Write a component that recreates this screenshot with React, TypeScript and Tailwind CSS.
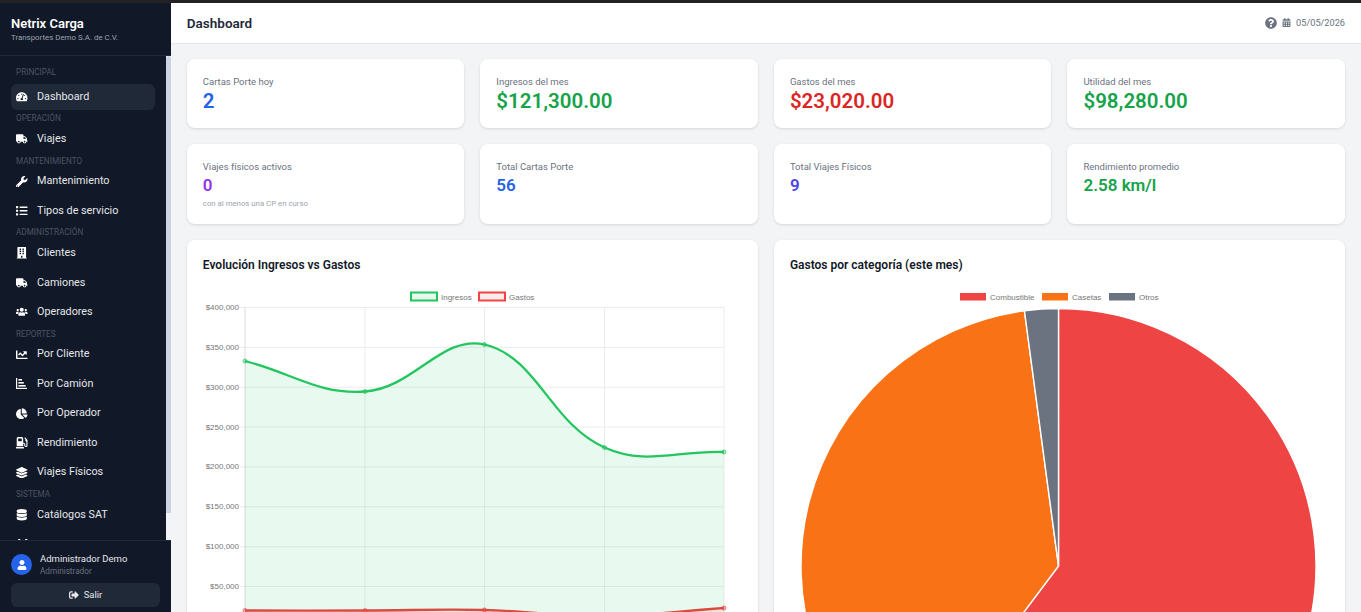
import type { ReactNode } from "react";
import {
  FaBuilding,
  FaCalendarAlt,
  FaChartLine,
  FaChartPie,
  FaDatabase,
  FaGasPump,
  FaLayerGroup,
  FaList,
  FaQuestionCircle,
  FaSignOutAlt,
  FaTachometerAlt,
  FaTruck,
  FaUser,
  FaUsers,
  FaWrench,
} from "react-icons/fa";

const font = "font-['Roboto','Liberation_Sans',sans-serif]";

function SectionLabel({ children }: { children: ReactNode }) {
  return (
    <div className="h-[12.8px] pl-[5px] text-[8.2px] leading-[10px] text-[#4b5563] uppercase">
      {children}
    </div>
  );
}

function NavItem({
  icon,
  label,
  active,
}: {
  icon: ReactNode;
  label?: string;
  active?: boolean;
}) {
  return (
    <div
      className={
        "mb-[3.5px] flex h-[26px] items-center rounded-md pl-[5px] text-[10.8px] text-[#e5e7eb] " +
        (active ? "bg-[#1f2937]" : "")
      }
    >
      <span className="flex w-[21px] shrink-0 items-center text-[11.5px] text-white">{icon}</span>
      {label}
    </div>
  );
}

function BarsIcon() {
  return (
    <svg width="11" height="11" viewBox="0 0 11 11" fill="currentColor">
      <rect x="0" y="0" width="1.2" height="11" />
      <rect x="0" y="9.8" width="11" height="1.2" />
      <rect x="2.4" y="1" width="3.6" height="1.6" />
      <rect x="2.4" y="4" width="5.4" height="1.6" />
      <rect x="2.4" y="7" width="7.2" height="1.6" />
    </svg>
  );
}

// last item of the menu, only the top of its icon shows above the footer
function PeekIcon() {
  return (
    <svg width="12" height="11" viewBox="0 0 12 11" fill="currentColor">
      <rect x="2" y="0" width="2.5" height="11" rx="1" />
      <rect x="9" y="0" width="2.5" height="11" rx="1" />
    </svg>
  );
}

function Sidebar() {
  return (
    <aside className="flex h-full w-[170.8px] shrink-0 flex-col bg-[#111827]">
      <div className="h-[53px] shrink-0 border-b border-[#1f2937] pt-[12px] pl-[11px]">
        <div className="text-[13px] leading-[17px] font-semibold text-white">Netrix Carga</div>
        <div className="text-[7.9px] leading-[12px] text-[#9ca3af]">Transportes Demo S.A. de C.V.</div>
      </div>
      <div className="flex min-h-0 flex-1">
        <nav className="min-w-0 flex-1 overflow-hidden pt-[11px] pr-[11px] pl-[11px]">
          <div className="mb-[4px]">
            <SectionLabel>Principal</SectionLabel>
          </div>
          <NavItem active icon={<FaTachometerAlt />} label="Dashboard" />
          <SectionLabel>Operación</SectionLabel>
          <NavItem icon={<FaTruck />} label="Viajes" />
          <SectionLabel>Mantenimiento</SectionLabel>
          <NavItem icon={<FaWrench />} label="Mantenimiento" />
          <NavItem icon={<FaList />} label="Tipos de servicio" />
          <SectionLabel>Administración</SectionLabel>
          <NavItem icon={<FaBuilding />} label="Clientes" />
          <NavItem icon={<FaTruck />} label="Camiones" />
          <NavItem icon={<FaUsers />} label="Operadores" />
          <SectionLabel>Reportes</SectionLabel>
          <NavItem icon={<FaChartLine />} label="Por Cliente" />
          <NavItem icon={<BarsIcon />} label="Por Camión" />
          <NavItem icon={<FaChartPie />} label="Por Operador" />
          <NavItem icon={<FaGasPump />} label="Rendimiento" />
          <NavItem icon={<FaLayerGroup />} label="Viajes Físicos" />
          <SectionLabel>Sistema</SectionLabel>
          <NavItem icon={<FaDatabase />} label="Catálogos SAT" />
          <NavItem icon={<PeekIcon />} />
        </nav>
        <div className="flex w-[5px] shrink-0 flex-col bg-[#f1f5f9]">
          <div className="flex-1 rounded-t-sm bg-[#cbd5e1]" />
          <div className="h-[27px]" />
        </div>
      </div>
      <div className="h-[72px] shrink-0 border-t border-[#1f2937] px-[11px] pt-[11px]">
        <div className="flex items-center gap-2">
          <div className="flex h-[21px] w-[21px] items-center justify-center rounded-full bg-[#2563eb] text-[10px] text-white">
            <FaUser />
          </div>
          <div>
            <div className="text-[9.5px] leading-[13px] text-[#e5e7eb]">Administrador Demo</div>
            <div className="text-[8.2px] leading-[12px] text-[#6b7280]">Administrador</div>
          </div>
        </div>
        <div className="mt-[6px] flex h-[24px] w-[149px] items-center justify-center gap-[5px] rounded-md bg-[#1f2937] text-[9.5px] text-[#e5e7eb]">
          <FaSignOutAlt className="text-[10px]" />
          Salir
        </div>
      </div>
    </aside>
  );
}

function StatCard({
  label,
  value,
  color,
  big,
  note,
}: {
  label: string;
  value: string;
  color: string;
  big?: boolean;
  note?: string;
}) {
  return (
    <div className="rounded-lg bg-white px-4 pt-[16px] shadow-[0_1px_3px_rgba(0,0,0,0.12)]">
      <div className="text-[9.5px] leading-[14px] text-[#6b7280]">{label}</div>
      <div className={(big ? "text-[20.5px] leading-[25px] " : "text-[17px] leading-[22px] ") + "font-semibold " + color}>
        {value}
      </div>
      {note && <div className="mt-[3px] text-[7.8px] leading-[10px] text-[#9ca3af]">{note}</div>}
    </div>
  );
}

type Pt = [number, number];

// same spline as chart.js with tension 0.4
function spline(pts: Pt[]) {
  const t = 0.4;
  const ctrl = pts.map((p, i) => {
    const a = pts[Math.max(i - 1, 0)];
    const b = pts[Math.min(i + 1, pts.length - 1)];
    const d1 = Math.hypot(p[0] - a[0], p[1] - a[1]);
    const d2 = Math.hypot(b[0] - p[0], b[1] - p[1]);
    const sum = d1 + d2 || 1;
    const f1 = (t * d1) / sum;
    const f2 = (t * d2) / sum;
    return {
      prev: [p[0] - f1 * (b[0] - a[0]), p[1] - f1 * (b[1] - a[1])],
      next: [p[0] + f2 * (b[0] - a[0]), p[1] + f2 * (b[1] - a[1])],
    };
  });
  let d = `M${pts[0][0]} ${pts[0][1]}`;
  for (let i = 1; i < pts.length; i++) {
    const c1 = ctrl[i - 1].next;
    const c2 = ctrl[i].prev;
    d += ` C${c1[0]} ${c1[1]} ${c2[0]} ${c2[1]} ${pts[i][0]} ${pts[i][1]}`;
  }
  return d;
}

// chart coords: the svg starts at x=187, y=286 of the page
const ingresos: Pt[] = [
  [58, 75],
  [178, 105.5],
  [297.5, 58.5],
  [417.5, 161.5],
  [537, 166],
];
const gastos: Pt[] = [
  [58, 324.5],
  [178, 324.5],
  [297.5, 324],
  [417.5, 330],
  [537, 322],
];
const yTicks = ["$400,000", "$350,000", "$300,000", "$250,000", "$200,000", "$150,000", "$100,000", "$50,000"];

function LineChart() {
  return (
    <svg width="571" height="340" className="block" style={{ fontFamily: "Liberation Sans, sans-serif" }}>
      <rect x="224" y="6.5" width="26" height="8" fill="rgba(34,197,94,0.1)" stroke="#22c55e" strokeWidth="2" />
      <text x="254" y="13.5" fontSize="8" fill="#777">Ingresos</text>
      <rect x="292" y="6.5" width="26" height="8" fill="rgba(239,68,68,0.1)" stroke="#ef4444" strokeWidth="2" />
      <text x="322" y="13.5" fontSize="8" fill="#777">Gastos</text>
      {yTicks.map((t, i) => (
        <g key={t}>
          <line x1="53" x2="537" y1={21.5 + i * 39.86} y2={21.5 + i * 39.86} stroke="#ececec" />
          <text x="52" y={24 + i * 39.86} fontSize="8" textAnchor="end" fill="#777">{t}</text>
        </g>
      ))}
      {[58, 178, 297.5, 417.5, 537].map((x, i) => (
        <line key={x} x1={x} x2={x} y1="21" y2="340" stroke={i === 0 ? "#dcdcdc" : "#ececec"} />
      ))}
      <path d={spline(ingresos) + " L537 340 L58 340 Z"} fill="rgba(34,197,94,0.1)" />
      <path d={spline(gastos) + " L537 340 L58 340 Z"} fill="rgba(239,68,68,0.1)" />
      <path d={spline(ingresos)} fill="none" stroke="#22c55e" strokeWidth="2.3" />
      <path d={spline(gastos)} fill="none" stroke="#dc4a3f" strokeWidth="2.3" />
      {ingresos.map((p) => (
        <circle key={p[0]} cx={p[0]} cy={p[1]} r="2" fill="rgba(34,197,94,0.3)" stroke="#22c55e" strokeWidth="0.7" />
      ))}
      {gastos.map((p) => (
        <circle key={p[0]} cx={p[0]} cy={p[1]} r="2" fill="rgba(239,68,68,0.3)" stroke="#ef4444" strokeWidth="0.7" />
      ))}
    </svg>
  );
}

function PieChart() {
  // center and radius in svg coords; the svg starts at x=774, y=286 of the page
  const cx = 284.5;
  const cy = 280;
  const r = 257.5;
  const at = (deg: number) => {
    const a = (deg * Math.PI) / 180;
    return `${cx + r * Math.sin(a)} ${cy - r * Math.cos(a)}`;
  };
  const slice = (from: number, to: number, large: number) =>
    `M${cx} ${cy} L${at(from)} A${r} ${r} 0 ${large} 1 ${at(to)} Z`;
  return (
    <svg width="571" height="340" className="block" style={{ fontFamily: "Liberation Sans, sans-serif" }}>
      <rect x="186" y="7" width="26" height="7.5" fill="#ef4444" />
      <text x="216" y="13.5" fontSize="8" fill="#777">Combustible</text>
      <rect x="268" y="7" width="26" height="7.5" fill="#f97316" />
      <text x="298" y="13.5" fontSize="8" fill="#777">Casetas</text>
      <rect x="335" y="7" width="26" height="7.5" fill="#6b7280" />
      <text x="365" y="13.5" fontSize="8" fill="#777">Otros</text>
      <path d={slice(0, 216.9, 1)} fill="#ef4444" stroke="#fff" strokeWidth="1.4" />
      <path d={slice(216.9, 352.4, 0)} fill="#f97316" stroke="#fff" strokeWidth="1.4" />
      <path d={slice(352.4, 360, 0)} fill="#6b7280" stroke="#fff" strokeWidth="1.4" />
    </svg>
  );
}

function ChartCard({ title, children }: { title: string; children: ReactNode }) {
  return (
    <div className="overflow-hidden rounded-lg bg-white shadow-[0_1px_3px_rgba(0,0,0,0.12)]">
      <div className="h-[46px] pt-[16px] pl-4 text-[12px] leading-[18px] font-semibold text-[#111827]">{title}</div>
      {children}
    </div>
  );
}

export default function App() {
  return (
    <div className={"flex h-screen flex-col overflow-hidden bg-[#f3f4f6] " + font}>
      <div className="h-[3px] shrink-0 bg-[#222222]" />
      <div className="flex min-h-0 flex-1">
        <Sidebar />
        <main className="min-w-0 flex-1 overflow-hidden">
          <header className="flex h-[41px] items-center justify-between border-b border-[#e5e7eb] bg-white pr-4 pl-4">
            <h1 className="text-[13.5px] font-semibold text-[#1f2937]">Dashboard</h1>
            <div className="flex items-center text-[9.2px] text-[#6b7280]">
              <FaQuestionCircle className="mr-[5px] text-[12px] text-[#6b7280]" />
              <FaCalendarAlt className="mr-[5px] text-[9px]" />
              05/05/2026
            </div>
          </header>
          <div className="px-4 pt-[15px]">
            <div className="grid h-[69px] grid-cols-4 gap-4">
              <StatCard big label="Cartas Porte hoy" value="2" color="text-[#2563eb]" />
              <StatCard big label="Ingresos del mes" value="$121,300.00" color="text-[#16a34a]" />
              <StatCard big label="Gastos del mes" value="$23,020.00" color="text-[#dc2626]" />
              <StatCard big label="Utilidad del mes" value="$98,280.00" color="text-[#16a34a]" />
            </div>
            <div className="mt-4 grid h-[80px] grid-cols-4 gap-4">
              <StatCard label="Viajes físicos activos" value="0" color="text-[#9333ea]" note="con al menos una CP en curso" />
              <StatCard label="Total Cartas Porte" value="56" color="text-[#2563eb]" />
              <StatCard label="Total Viajes Físicos" value="9" color="text-[#4f46e5]" />
              <StatCard label="Rendimiento promedio" value="2.58 km/l" color="text-[#16a34a]" />
            </div>
            <div className="mt-4 grid grid-cols-2 gap-4">
              <ChartCard title="Evolución Ingresos vs Gastos">
                <LineChart />
              </ChartCard>
              <ChartCard title="Gastos por categoría (este mes)">
                <PieChart />
              </ChartCard>
            </div>
          </div>
        </main>
      </div>
    </div>
  );
}
